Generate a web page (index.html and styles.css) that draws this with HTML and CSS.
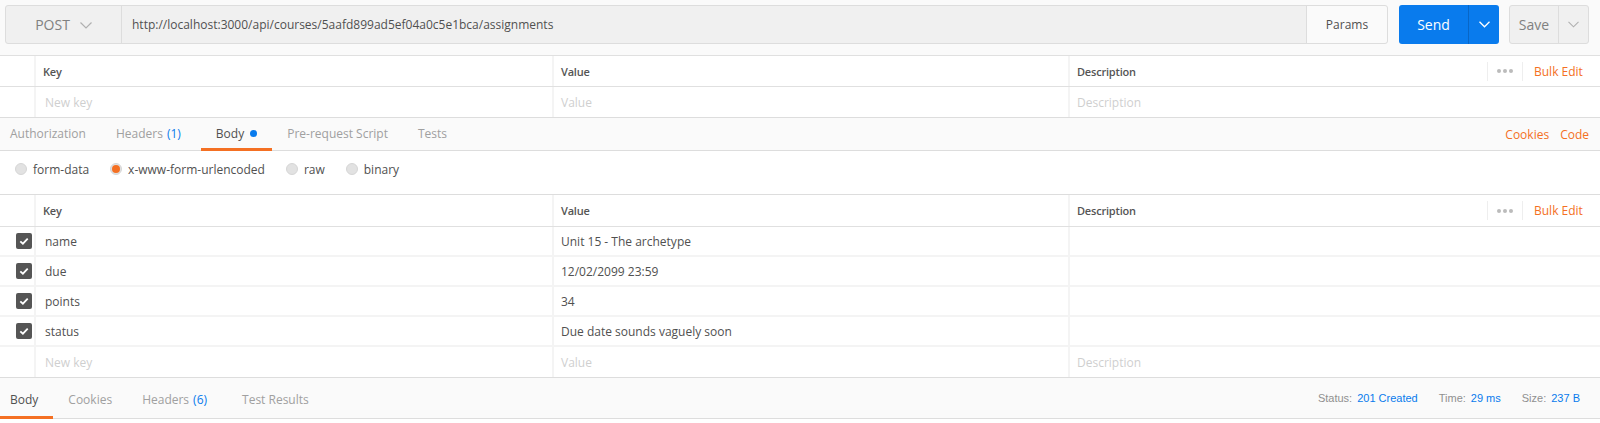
FILE: index.html
```html
<!DOCTYPE html>
<html>
<head>
<meta charset="utf-8">
<link rel="stylesheet" href="styles.css">
</head>
<body>
<div class="app">
  <div class="topbar">
    <div class="urlgroup">
      <div class="method">POST
        <svg class="chev" width="12" height="7" viewBox="0 0 12 7"><path d="M0.5 0.5 L6 6 L11.5 0.5" fill="none" stroke="#b0b0b0" stroke-width="1.2"/></svg>
      </div>
      <div class="url">http://localhost:3000/api/courses/5aafd899ad5ef04a0c5e1bca/assignments</div>
      <div class="params-btn">Params</div>
    </div>
    <div class="send">
      <span class="send-main">Send</span>
      <span class="send-drop"><svg width="11" height="7" viewBox="0 0 11 7"><path d="M0.5 0.8 L5.5 5.8 L10.5 0.8" fill="none" stroke="#ffffff" stroke-width="1.3"/></svg></span>
    </div>
    <div class="save">
      <span class="save-main">Save</span>
      <span class="save-drop"><svg width="11" height="7" viewBox="0 0 11 7"><path d="M0.5 0.8 L5.5 5.8 L10.5 0.8" fill="none" stroke="#b0b0b0" stroke-width="1.1"/></svg></span>
    </div>
  </div>

  <div class="kv">
    <div class="kv-row kv-head">
      <div class="cell c-check"></div>
      <div class="cell">Key</div>
      <div class="cell">Value</div>
      <div class="cell c-desc"><span class="desc-label">Description</span><span class="dots"><i></i><i></i><i></i></span><span class="bulk">Bulk Edit</span></div>
    </div>
    <div class="kv-row kv-last">
      <div class="cell c-check"></div>
      <div class="cell ph">New key</div>
      <div class="cell ph">Value</div>
      <div class="cell ph">Description</div>
    </div>
  </div>

  <div class="tabs req-tabs">
    <div class="tab">Authorization</div>
    <div class="tab">Headers <span class="count">(1)</span></div>
    <div class="tab active">Body <span class="bdot"></span></div>
    <div class="tab">Pre-request Script</div>
    <div class="tab">Tests</div>
    <div class="tabs-right"><span>Cookies</span><span>Code</span></div>
  </div>

  <div class="radios">
    <label class="radio"><span class="rb"></span>form-data</label>
    <label class="radio"><span class="rb on"></span>x-www-form-urlencoded</label>
    <label class="radio"><span class="rb"></span>raw</label>
    <label class="radio"><span class="rb"></span>binary</label>
  </div>

  <div class="kv body-kv">
    <div class="kv-row kv-head">
      <div class="cell c-check"></div>
      <div class="cell">Key</div>
      <div class="cell">Value</div>
      <div class="cell c-desc"><span class="desc-label">Description</span><span class="dots"><i></i><i></i><i></i></span><span class="bulk">Bulk Edit</span></div>
    </div>
    <div class="kv-row kv-item">
      <div class="cell c-check"><span class="cb"><svg width="16" height="16" viewBox="0 0 16 16"><path d="M4.3 8.3 L6.9 10.7 L11.7 5.6" fill="none" stroke="#fff" stroke-width="1.8"/></svg></span></div>
      <div class="cell">name</div>
      <div class="cell">Unit 15 - The archetype</div>
      <div class="cell"></div>
    </div>
    <div class="kv-row kv-item">
      <div class="cell c-check"><span class="cb"><svg width="16" height="16" viewBox="0 0 16 16"><path d="M4.3 8.3 L6.9 10.7 L11.7 5.6" fill="none" stroke="#fff" stroke-width="1.8"/></svg></span></div>
      <div class="cell">due</div>
      <div class="cell">12/02/2099 23:59</div>
      <div class="cell"></div>
    </div>
    <div class="kv-row kv-item">
      <div class="cell c-check"><span class="cb"><svg width="16" height="16" viewBox="0 0 16 16"><path d="M4.3 8.3 L6.9 10.7 L11.7 5.6" fill="none" stroke="#fff" stroke-width="1.8"/></svg></span></div>
      <div class="cell">points</div>
      <div class="cell">34</div>
      <div class="cell"></div>
    </div>
    <div class="kv-row kv-item">
      <div class="cell c-check"><span class="cb"><svg width="16" height="16" viewBox="0 0 16 16"><path d="M4.3 8.3 L6.9 10.7 L11.7 5.6" fill="none" stroke="#fff" stroke-width="1.8"/></svg></span></div>
      <div class="cell">status</div>
      <div class="cell">Due date sounds vaguely soon</div>
      <div class="cell"></div>
    </div>
    <div class="kv-row kv-last">
      <div class="cell c-check"></div>
      <div class="cell ph">New key</div>
      <div class="cell ph">Value</div>
      <div class="cell ph">Description</div>
    </div>
  </div>

  <div class="tabs resp-tabs">
    <div class="tab active">Body</div>
    <div class="tab">Cookies</div>
    <div class="tab">Headers <span class="count">(6)</span></div>
    <div class="tab">Test Results</div>
    <div class="status">
      <span class="st"><span class="lbl">Status:</span><span class="val">201 Created</span></span>
      <span class="st"><span class="lbl">Time:</span><span class="val">29 ms</span></span>
      <span class="st"><span class="lbl">Size:</span><span class="val">237 B</span></span>
    </div>
  </div>
</div>
</body>
</html>
```

FILE: styles.css
```css
* { box-sizing: border-box; }

body {
  margin: 0;
  font-family: "Open Sans", "DejaVu Sans", sans-serif;
  font-size: 12px;
  color: #505050;
  background: #ffffff;
}

/* ---------- top bar ---------- */
.topbar {
  display: flex;
  align-items: flex-start;
  height: 56px;
  padding: 5px 11px 0 5px;
  background: #fafafa;
  border-bottom: 1px solid #e0e0e0;
}

.urlgroup {
  flex: 1;
  display: flex;
  height: 39px;
  border: 1px solid #dddddd;
  border-radius: 3px;
  background: #f0f0f0;
}

.method {
  width: 116px;
  border-right: 1px solid #dddddd;
  display: flex;
  align-items: center;
  justify-content: center;
  gap: 10px;
  font-size: 14px;
  color: #808080;
}

.chev { margin-top: 1px; }

.url {
  flex: 1;
  display: flex;
  align-items: center;
  padding-left: 10px;
  color: #505050;
}

.params-btn {
  width: 81px;
  border-left: 1px solid #dddddd;
  background: #fafafa;
  border-radius: 0 3px 3px 0;
  display: flex;
  align-items: center;
  justify-content: center;
  color: #505050;
}

.send {
  margin-left: 11px;
  width: 100px;
  height: 39px;
  display: flex;
  background: #097bed;
  border-radius: 3px;
  color: #ffffff;
  font-size: 14px;
}

.send-main {
  width: 69px;
  display: flex;
  align-items: center;
  justify-content: center;
}

.send-drop {
  flex: 1;
  border-left: 1px solid #0866c6;
  display: flex;
  align-items: center;
  justify-content: center;
}

.save {
  margin-left: 10px;
  width: 80px;
  height: 39px;
  display: flex;
  background: #f0f0f0;
  border: 1px solid #dddddd;
  border-radius: 3px;
  color: #808080;
  font-size: 14px;
}

.save-main {
  width: 48px;
  display: flex;
  align-items: center;
  justify-content: center;
}

.save-drop {
  flex: 1;
  border-left: 1px solid #dddddd;
  display: flex;
  align-items: center;
  justify-content: center;
}

/* ---------- key/value tables ---------- */
.kv { background: #ffffff; }

.kv-row {
  display: grid;
  grid-template-columns: 34px 518px 516px 1fr;
}

.cell {
  display: flex;
  align-items: center;
  padding-left: 7px;
  border-left: 2px solid #f4f4f4;
  min-width: 0;
  white-space: nowrap;
}

.kv-item .cell:nth-child(2),
.kv-last .cell:nth-child(2) { padding-left: 9px; }

.cell.c-check {
  border-left: none;
  padding-left: 16px;
}

.kv-head {
  height: 31px;
  border-bottom: 1px solid #e0e0e0;
  font-size: 11px;
  font-weight: 600;
  letter-spacing: -0.2px;
  color: #555555;
}

.kv-last {
  height: 31px;
  border-bottom: 1px solid #dddddd;
}

.kv-item {
  height: 30px;
  border-bottom: 2px solid #f4f4f4;
}

.ph { color: #cfcfcf; }

.c-desc { padding-right: 0; }

.desc-label { flex: 1; }

.dots {
  width: 36px;
  height: 19px;
  display: flex;
  align-items: center;
  justify-content: center;
  gap: 2px;
  border-left: 1px solid #eeeeee;
  border-right: 1px solid #eeeeee;
}

.dots i {
  width: 4px;
  height: 4px;
  border-radius: 50%;
  background: #bbbbbb;
}

.bulk {
  width: 77px;
  padding-left: 11px;
  font-size: 12px;
  font-weight: 400;
  letter-spacing: 0;
  color: #f47023;
}

.body-kv { border-top: 1px solid #dddddd; }
.body-kv .kv-head { height: 32px; }

.cb {
  width: 16px;
  height: 16px;
  border-radius: 2px;
  background: #555555;
  display: flex;
}

/* ---------- tabs ---------- */
.tabs {
  display: flex;
  background: #fafafa;
  border-bottom: 1px solid #dddddd;
}

.req-tabs { height: 33px; }
.resp-tabs { height: 41px; }

.tab {
  display: flex;
  align-items: center;
  padding: 0 15px;
  color: #a0a0a0;
  border-bottom: 3px solid transparent;
  margin-bottom: -1px;
  white-space: nowrap;
}

.resp-tabs .tab { padding-top: 4px; }

.tab:first-child { padding-left: 10px; }

.tab.active {
  color: #505050;
  border-bottom-color: #f47023;
}

.count {
  color: #097bed;
  margin-left: 4px;
  margin-right: 5px;
}

.bdot {
  width: 7px;
  height: 7px;
  border-radius: 50%;
  background: #097bed;
  margin-left: 6px;
  margin-top: 1px;
}

.tabs-right {
  margin-left: auto;
  display: flex;
  align-items: center;
  gap: 11px;
  padding-right: 11px;
  color: #f47023;
}

/* ---------- radios ---------- */
.radios {
  height: 43px;
  display: flex;
  align-items: flex-start;
  padding: 9px 0 0 15px;
  background: #ffffff;
}

.radio {
  display: flex;
  align-items: center;
  height: 18px;
  margin-right: 21px;
  color: #505050;
}

.rb {
  width: 12px;
  height: 12px;
  border-radius: 50%;
  background: #e2e2e2;
  border: 1px solid #d6d6d6;
  margin-right: 6px;
  display: flex;
  align-items: center;
  justify-content: center;
}

.rb.on::after {
  content: "";
  width: 8px;
  height: 8px;
  border-radius: 50%;
  background: #f47023;
}

/* ---------- response status ---------- */
.status {
  margin-left: auto;
  display: flex;
  align-items: center;
  gap: 21px;
  padding-right: 20px;
  font-family: "Liberation Sans", Arial, sans-serif;
  font-size: 11px;
}

.lbl { color: #909090; }
.val { color: #097bed; margin-left: 5px; }
```
